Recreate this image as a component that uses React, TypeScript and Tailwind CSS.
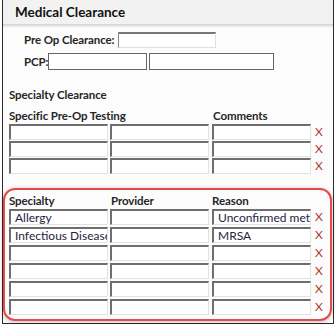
import React from "react";

const font = { fontFamily: 'Lato, "Noto Sans", sans-serif' };

function Cell({ value = "" }: { value?: string }) {
  return (
    <div className="w-[99px] h-[16px] border-t-2 border-l-2 border-r border-b border-t-[#6e6e6e] border-l-[#6e6e6e] border-r-[#e2e2e2] border-b-[#e2e2e2] bg-white overflow-hidden whitespace-nowrap text-[12px] leading-[13px] text-[#2a2340] pl-[4px]">
      {value}
    </div>
  );
}

function Row({ a = "", b = "", c = "" }: { a?: string; b?: string; c?: string }) {
  return (
    <div className="flex items-center">
      <Cell value={a} />
      <div className="w-[2px]" />
      <Cell value={b} />
      <div className="w-[3px]" />
      <Cell value={c} />
      <div className="ml-[4px] text-[12px] leading-[16px] text-[#b03a30]">X</div>
    </div>
  );
}

const label = "text-[11.5px] font-bold text-[#262626] leading-[16px] tracking-[-0.1px] whitespace-nowrap";

export default function App() {
  return (
    <div className="w-[335px] h-[325px] bg-white" style={font}>
      <div className="ml-[2px] w-[332px] h-[324px] border-l border-r border-b border-[#2a2a2a] bg-[#fcfcfc] flex flex-col">
        <div className="h-[24px] bg-[#f2f2f2] flex items-center pl-[12px]">
          <span className="text-[13.5px] font-bold text-[#111]">Medical Clearance</span>
        </div>
        <div className="h-[4px] bg-gradient-to-b from-[#d2d2d2] to-[#fcfcfc]" />
        <div className="mt-[4px] h-[16px] flex items-center">
          <span className={`ml-[21px] w-[94px] ${label}`}>Pre Op Clearance:</span>
          <div className="w-[98px] h-[16px] bg-white border-t-2 border-l border-r border-b border-t-[#777] border-l-[#888] border-r-[#e0e0e0] border-b-[#e0e0e0]" />
        </div>
        <div className="mt-[5px] h-[17px] flex items-center">
          <span className={`ml-[21px] w-[24px] ${label}`}>PCP:</span>
          <div className="w-[99px] h-[17px] bg-white border border-[#666]" />
          <div className="ml-[2px] w-[125px] h-[17px] bg-white border border-[#666]" />
        </div>
        <div className={`mt-[17px] pl-[6px] h-[16px] ${label}`}>Specialty Clearance</div>
        <div className={`mt-[5px] pl-[6px] h-[16px] flex ${label}`}>
          <span className="w-[204px]">Specific Pre-Op Testing</span>
          <span>Comments</span>
        </div>
        <div className="pl-[6px] flex flex-col gap-[1px]">
          <Row />
          <Row />
          <Row />
        </div>
        <div className="mt-[14px] w-[329px] h-[133px] border-2 border-[#e94848] rounded-[12px] shadow-[0_1px_4px_rgba(0,0,0,0.25)] pt-[3px] pl-[4px] flex flex-col">
          <div className={`h-[16px] flex ${label}`}>
            <span className="w-[102px]">Specialty</span>
            <span className="w-[101px]">Provider</span>
            <span>Reason</span>
          </div>
          <div className="flex flex-col gap-[2px]">
            <Row a="Allergy" c="Unconfirmed metabolic" />
            <Row a="Infectious Disease" c="MRSA" />
            <Row />
            <Row />
            <Row />
            <Row />
          </div>
        </div>
      </div>
    </div>
  );
}
